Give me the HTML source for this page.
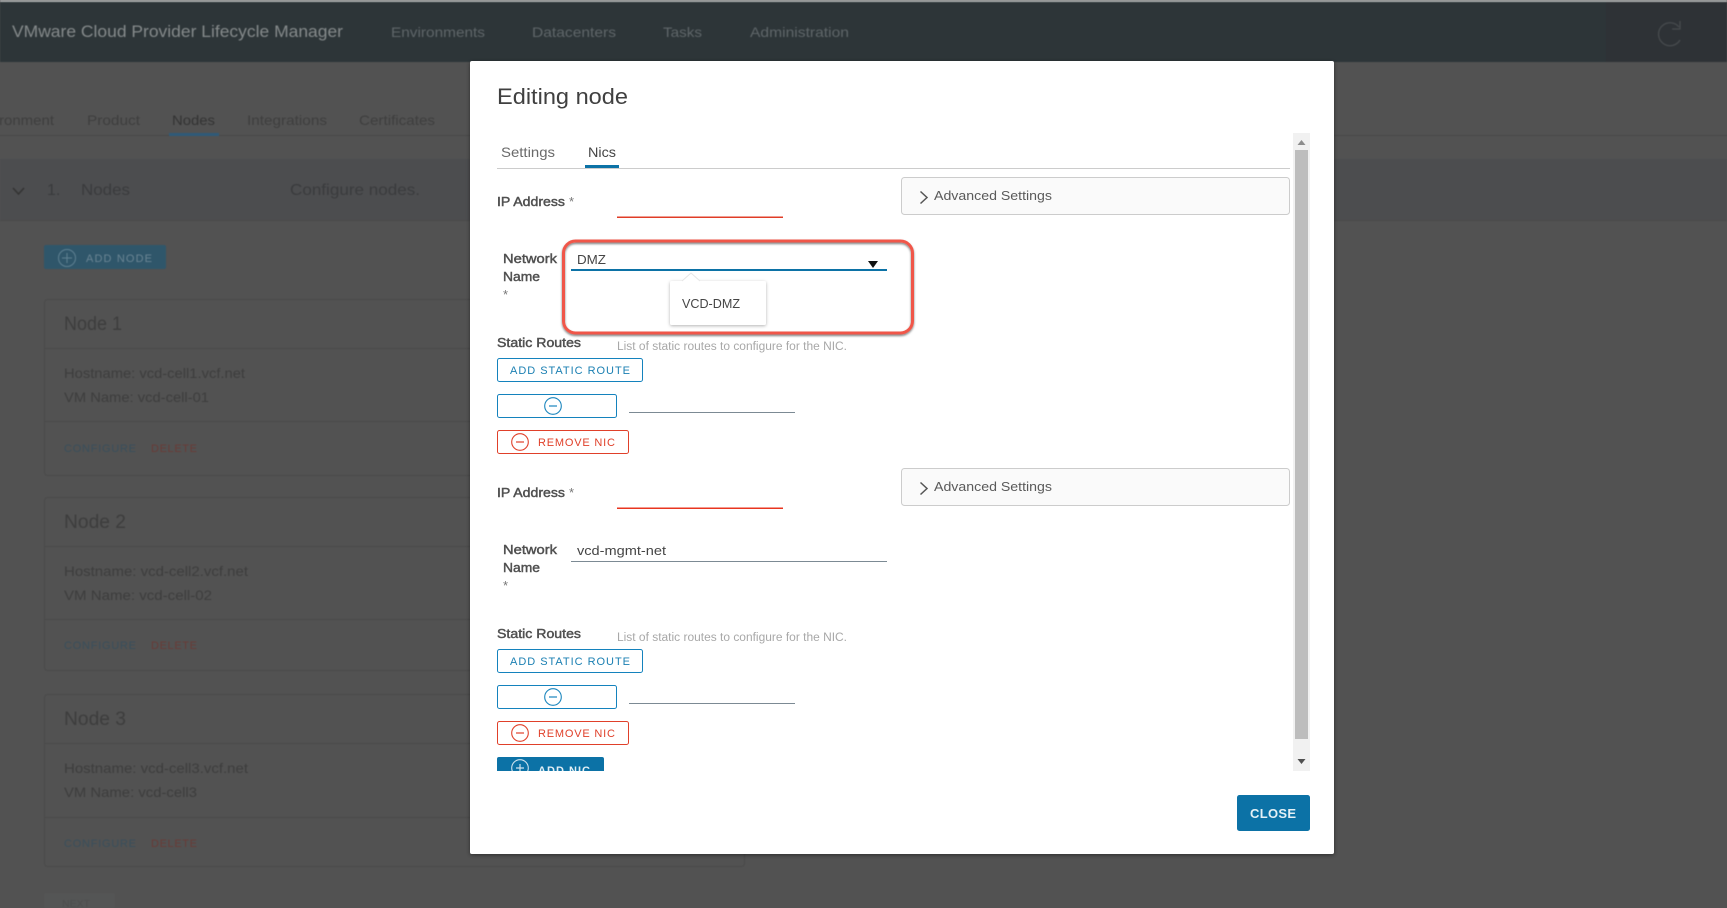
<!DOCTYPE html>
<html><head><meta charset="utf-8"><title>Editing node</title>
<style>
html,body{margin:0;padding:0;width:1727px;height:908px;overflow:hidden;background:#525252}
svg{display:block;position:absolute;left:0;top:0}
text{font-family:"Liberation Sans",sans-serif}
.bg{filter:blur(.6px)}
.fg{filter:blur(.35px)}
.b{fill:#505050;stroke:#505050;stroke-width:.45}
</style></head><body>
<svg width="1727" height="908" viewBox="0 0 1727 908" xmlns="http://www.w3.org/2000/svg">
<defs>
<filter id="ms" x="-5%" y="-5%" width="110%" height="110%"><feDropShadow dx="0" dy="1" stdDeviation="2" flood-color="#000" flood-opacity=".45"/></filter>
<filter id="ps" x="-20%" y="-20%" width="140%" height="150%"><feDropShadow dx="0" dy="1" stdDeviation="1.5" flood-color="#000" flood-opacity=".3"/></filter>
<filter id="rs" x="-5%" y="-5%" width="110%" height="115%"><feDropShadow dx="0" dy="1.5" stdDeviation="1" flood-color="#000" flood-opacity=".5"/></filter>
<clipPath id="cl"><rect x="490" y="120" width="800" height="651"/></clipPath>
</defs>
<g class="bg">
<rect width="1727" height="908" fill="#525252"/>
<rect width="1727" height="62" fill="#2d3538"/>
<rect x="1606" y="2" width="121" height="60" fill="#2e3236"/>
<rect width="1727" height="2" fill="#a8aaab"/>
<text x="12" y="37" font-size="17" fill="#858a8b" textLength="331" lengthAdjust="spacingAndGlyphs">VMware Cloud Provider Lifecycle Manager</text>
<g font-size="14" fill="#5f6669">
<text x="391" y="37" textLength="94" lengthAdjust="spacingAndGlyphs">Environments</text>
<text x="532" y="37" textLength="84" lengthAdjust="spacingAndGlyphs">Datacenters</text>
<text x="663" y="37" textLength="39" lengthAdjust="spacingAndGlyphs">Tasks</text>
<text x="750" y="37" textLength="99" lengthAdjust="spacingAndGlyphs">Administration</text>
</g>
<path d="M1679 27A11.5 11.5 0 1 0 1680 40M1680 21V29H1672" fill="none" stroke="#474b4e" stroke-width="1.3"/>

<g font-size="14" fill="#3e3e3e">
<text x="-1" y="125" textLength="55" lengthAdjust="spacingAndGlyphs">ronment</text>
<text x="87" y="125" textLength="53" lengthAdjust="spacingAndGlyphs">Product</text>
<text x="172" y="125" textLength="43" lengthAdjust="spacingAndGlyphs" fill="#333">Nodes</text>
<text x="247" y="125" textLength="80" lengthAdjust="spacingAndGlyphs">Integrations</text>
<text x="359" y="125" textLength="76" lengthAdjust="spacingAndGlyphs">Certificates</text>
</g>
<rect y="135" width="1727" height="1" fill="#474747"/>
<rect x="169" y="133" width="50" height="3" fill="#2f5a78"/>

<rect y="159" width="1727" height="61" fill="#4c4d4f"/>
<rect y="220" width="1727" height="1" fill="#4a4a4a"/>
<path d="M13 188L18.500 194L24 188" fill="none" stroke="#333" stroke-width="1.500"/>
<g font-size="16" fill="#3a3b3d">
<text x="47" y="195">1.</text>
<text x="81" y="195" textLength="49" lengthAdjust="spacingAndGlyphs">Nodes</text>
<text x="290" y="195" textLength="130" lengthAdjust="spacingAndGlyphs">Configure nodes.</text>
</g>
<rect x="44" y="245" width="122" height="24" rx="2" fill="#2f566a"/>
<circle cx="67" cy="258" r="8.500" fill="none" stroke="#5f8192" stroke-width="1"/>
<path d="M67 253V263M62 258H72" stroke="#5f8192" stroke-width="1"/>
<text x="86" y="262" font-size="11" fill="#6a8594" textLength="66" lengthAdjust="spacing">ADD NODE</text>

<g fill="none" stroke="#4a4a4a">
<rect x="44.500" y="299.500" width="700" height="176" rx="3"/>
<path d="M45 348.500H744M45 421.500H744"/>
<rect x="44.500" y="497.500" width="700" height="173" rx="3"/>
<path d="M45 546.500H744M45 619.500H744"/>
<rect x="44.500" y="694.500" width="700" height="172" rx="3"/>
<path d="M45 743.500H744M45 817.500H744"/>
</g>
<g fill="#3d3d3d">
<text x="64" y="330" font-size="19" textLength="58" lengthAdjust="spacingAndGlyphs">Node 1</text>
<text x="64" y="378" font-size="14" textLength="181" lengthAdjust="spacingAndGlyphs">Hostname: vcd-cell1.vcf.net</text>
<text x="64" y="402" font-size="14" textLength="145" lengthAdjust="spacingAndGlyphs">VM Name: vcd-cell-01</text>
<text x="64" y="528" font-size="19" textLength="62" lengthAdjust="spacingAndGlyphs">Node 2</text>
<text x="64" y="576" font-size="14" textLength="184" lengthAdjust="spacingAndGlyphs">Hostname: vcd-cell2.vcf.net</text>
<text x="64" y="600" font-size="14" textLength="148" lengthAdjust="spacingAndGlyphs">VM Name: vcd-cell-02</text>
<text x="64" y="725" font-size="19" textLength="62" lengthAdjust="spacingAndGlyphs">Node 3</text>
<text x="64" y="773" font-size="14" textLength="184" lengthAdjust="spacingAndGlyphs">Hostname: vcd-cell3.vcf.net</text>
<text x="64" y="797" font-size="14" textLength="133" lengthAdjust="spacingAndGlyphs">VM Name: vcd-cell3</text>
</g>
<g font-size="11">
<text x="64" y="452" fill="#394f5c" textLength="72" lengthAdjust="spacing">CONFIGURE</text>
<text x="151" y="452" fill="#693b37" textLength="46" lengthAdjust="spacing">DELETE</text>
<text x="64" y="649" fill="#394f5c" textLength="72" lengthAdjust="spacing">CONFIGURE</text>
<text x="151" y="649" fill="#693b37" textLength="46" lengthAdjust="spacing">DELETE</text>
<text x="64" y="847" fill="#394f5c" textLength="72" lengthAdjust="spacing">CONFIGURE</text>
<text x="151" y="847" fill="#693b37" textLength="46" lengthAdjust="spacing">DELETE</text>
</g>
<rect x="44" y="893" width="71" height="15" rx="2" fill="#545555"/>
<text x="62" y="907" font-size="10.500" fill="#4d4d4d">NEXT</text>
</g>

<rect x="470" y="61" width="864" height="793" rx="2" fill="#fff" filter="url(#ms)"/>
<g class="fg">
<text x="497" y="104" font-size="22" fill="#404040" textLength="131" lengthAdjust="spacingAndGlyphs">Editing node</text>
<text x="501" y="157" font-size="14" fill="#6a6a6a" textLength="54" lengthAdjust="spacingAndGlyphs">Settings</text>
<text x="588" y="157" font-size="14" fill="#454545" textLength="28" lengthAdjust="spacingAndGlyphs">Nics</text>
<rect x="497" y="168" width="793" height="1" fill="#ccc"/>
<rect x="585" y="165" width="34" height="3" fill="#0c72a6"/>

<rect x="1293" y="133" width="17" height="638" fill="#f1f1f1"/>
<rect x="1295" y="150" width="13" height="589" fill="#bdbdbd"/>
<path d="M1297.500 145L1301.500 140L1305.500 145Z" fill="#8d8d8d"/>
<path d="M1297.500 759H1305.500L1301.500 764Z" fill="#505050"/>

<g clip-path="url(#cl)">
<text x="497" y="206" font-size="13" class="b" textLength="68" lengthAdjust="spacingAndGlyphs">IP Address</text>
<text x="569" y="206" font-size="13" fill="#777">*</text>
<rect x="617" y="216.500" width="166" height="1.500" fill="#e03c27"/>
<rect x="901.500" y="177.500" width="388" height="37" rx="3" fill="#fafafa" stroke="#ccc"/>
<path d="M920.500 191.500L927 197.500L920.500 203.500" fill="none" stroke="#555" stroke-width="1.500"/>
<text x="934" y="200" font-size="13" fill="#5a5a5a" textLength="118" lengthAdjust="spacingAndGlyphs">Advanced Settings</text>
<text x="503" y="263" font-size="13" class="b" textLength="54" lengthAdjust="spacingAndGlyphs">Network</text>
<text x="503" y="281" font-size="13" class="b" textLength="37" lengthAdjust="spacingAndGlyphs">Name</text>
<text x="503" y="299" font-size="13" fill="#777">*</text>
<text x="577" y="264" font-size="13" fill="#454545" textLength="29" lengthAdjust="spacingAndGlyphs">DMZ</text>
<rect x="571" y="269" width="316" height="2" fill="#0c72a6"/>
<path d="M868 261H878L873 268Z" fill="#111"/>
<rect x="670" y="281" width="96" height="44" rx="2" fill="#fff" filter="url(#ps)"/>
<path d="M682 281L691 273L700 281Z" fill="#fff"/>
<path d="M682 281L691 273L700 281" fill="none" stroke="#e6e6e6"/>
<text x="682" y="308" font-size="13" fill="#454545" textLength="58" lengthAdjust="spacingAndGlyphs">VCD-DMZ</text>
<rect x="563.500" y="241" width="349" height="92" rx="12" fill="none" stroke="#f0564a" stroke-width="3" filter="url(#rs)"/>
<text x="497" y="347" font-size="13" class="b" textLength="84" lengthAdjust="spacingAndGlyphs">Static Routes</text>
<text x="617" y="350" font-size="11.500" fill="#a8a8a8" textLength="230" lengthAdjust="spacingAndGlyphs">List of static routes to configure for the NIC.</text>
<rect x="497.500" y="358.500" width="145" height="23" rx="2" fill="#fff" stroke="#1482bd"/>
<text x="510" y="374" font-size="11" fill="#1a7fb2" textLength="120" lengthAdjust="spacing">ADD STATIC ROUTE</text>
<rect x="497.500" y="394.500" width="119" height="23" rx="2" fill="#fff" stroke="#1482bd"/>
<circle cx="553" cy="406" r="8.300" fill="none" stroke="#1a85bd" stroke-width="1.100"/>
<path d="M549 406H557" stroke="#1a85bd" stroke-width="1.200"/>
<rect x="629" y="412" width="166" height="1" fill="#7c8a94"/>
<rect x="497.500" y="430.500" width="131" height="23" rx="2" fill="#fff" stroke="#e0402a"/>
<circle cx="520" cy="442" r="8.300" fill="none" stroke="#e0402a" stroke-width="1.100"/>
<path d="M516 442H524" stroke="#e0402a" stroke-width="1.200"/>
<text x="538" y="446" font-size="11" fill="#e0402a" textLength="77" lengthAdjust="spacing">REMOVE NIC</text>

<text x="497" y="497" font-size="13" class="b" textLength="68" lengthAdjust="spacingAndGlyphs">IP Address</text>
<text x="569" y="497" font-size="13" fill="#777">*</text>
<rect x="617" y="507.500" width="166" height="1.500" fill="#e8351f"/>
<rect x="901.500" y="468.500" width="388" height="37" rx="3" fill="#fafafa" stroke="#ccc"/>
<path d="M920.500 482.500L927 488.500L920.500 494.500" fill="none" stroke="#555" stroke-width="1.500"/>
<text x="934" y="491" font-size="13" fill="#5a5a5a" textLength="118" lengthAdjust="spacingAndGlyphs">Advanced Settings</text>
<text x="503" y="554" font-size="13" class="b" textLength="54" lengthAdjust="spacingAndGlyphs">Network</text>
<text x="503" y="572" font-size="13" class="b" textLength="37" lengthAdjust="spacingAndGlyphs">Name</text>
<text x="503" y="590" font-size="13" fill="#777">*</text>
<text x="577" y="555" font-size="13" fill="#454545" textLength="89" lengthAdjust="spacingAndGlyphs">vcd-mgmt-net</text>
<rect x="571" y="561" width="316" height="1" fill="#7c8a94"/>
<text x="497" y="638" font-size="13" class="b" textLength="84" lengthAdjust="spacingAndGlyphs">Static Routes</text>
<text x="617" y="641" font-size="11.500" fill="#a8a8a8" textLength="230" lengthAdjust="spacingAndGlyphs">List of static routes to configure for the NIC.</text>
<rect x="497.500" y="649.500" width="145" height="23" rx="2" fill="#fff" stroke="#1482bd"/>
<text x="510" y="665" font-size="11" fill="#1a7fb2" textLength="120" lengthAdjust="spacing">ADD STATIC ROUTE</text>
<rect x="497.500" y="685.500" width="119" height="23" rx="2" fill="#fff" stroke="#1482bd"/>
<circle cx="553" cy="697" r="8.300" fill="none" stroke="#1a85bd" stroke-width="1.100"/>
<path d="M549 697H557" stroke="#1a85bd" stroke-width="1.200"/>
<rect x="629" y="703" width="166" height="1" fill="#7c8a94"/>
<rect x="497.500" y="721.500" width="131" height="23" rx="2" fill="#fff" stroke="#e0402a"/>
<circle cx="520" cy="733" r="8.300" fill="none" stroke="#e0402a" stroke-width="1.100"/>
<path d="M516 733H524" stroke="#e0402a" stroke-width="1.200"/>
<text x="538" y="737" font-size="11" fill="#e0402a" textLength="77" lengthAdjust="spacing">REMOVE NIC</text>
<rect x="497" y="757" width="107" height="24" rx="2" fill="#0c72a6"/>
<circle cx="520" cy="768" r="8.300" fill="none" stroke="#cfe3ee" stroke-width="1.100"/>
<path d="M516 768H524M520 764V772" stroke="#cfe3ee" stroke-width="1.200"/>
<text x="538" y="774" font-size="11" font-weight="bold" fill="#e4f0f6" textLength="52" lengthAdjust="spacing">ADD NIC</text>
</g>

<rect x="1237" y="795" width="73" height="36" rx="2.500" fill="#0c72a6"/>
<text x="1250" y="818" font-size="13" font-weight="bold" fill="#e4f0f6" textLength="46" lengthAdjust="spacing">CLOSE</text>
</g>
</svg>
</body></html>
